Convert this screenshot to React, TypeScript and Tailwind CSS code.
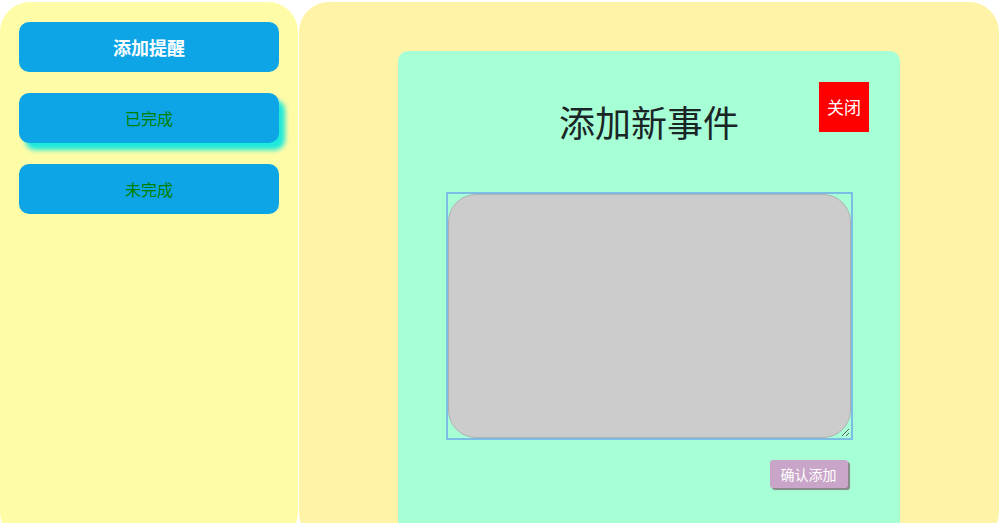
export default function App() {
  const cjk = { fontFamily: '"Noto Sans CJK SC", sans-serif' };
  return (
    <div className="flex h-[523px] w-[999px] overflow-hidden bg-white pt-[2px]" style={cjk}>
      <aside className="flex h-[540px] w-[298px] shrink-0 flex-col gap-[21px] rounded-[30px] bg-[#fffca7] px-[19px] pt-[20px]">
        <button className="h-[50px] w-[260px] rounded-[10px] bg-[#0ea5e6] text-[18px] font-bold text-white">
          添加提醒
        </button>
        <button className="h-[50px] w-[260px] rounded-[10px] bg-[#0ea5e6] text-[16px] text-[#008000] shadow-[6px_7px_5px_#1de9dc]">
          已完成
        </button>
        <button className="h-[50px] w-[260px] rounded-[10px] bg-[#0ea5e6] text-[16px] text-[#008000]">
          未完成
        </button>
      </aside>
      <main className="ml-[1px] flex h-[540px] flex-1 justify-center rounded-[30px] bg-[#fff3a7] pt-[49px]">
        <div className="relative flex h-[500px] w-[502px] flex-col items-center rounded-[10px] bg-[#a7ffd6]">
          <button className="absolute right-[31px] top-[31px] h-[50px] w-[50px] bg-[#ff0000] text-[17px] text-white">
            关闭
          </button>
          <h1 className="mt-[48px] h-[45px] text-[36px] leading-[45px] text-[#1a2626]">添加新事件</h1>
          <div className="mt-[48px] flex h-[248px] w-[407px] border-2 border-[#7cbde6]">
            <textarea
              autoFocus
              className="h-full w-full resize rounded-[28px] border border-[#b0b0b0] bg-[#cccccc] outline-none"
            />
          </div>
          <div className="mt-[20px] flex w-[407px] justify-end">
            <button className="mr-[5px] h-[28px] w-[78px] rounded-[3px] bg-[#c9a6c9] text-[14px] text-white shadow-[2px_2px_1px_#888888]">
              确认添加
            </button>
          </div>
        </div>
      </main>
    </div>
  );
}
